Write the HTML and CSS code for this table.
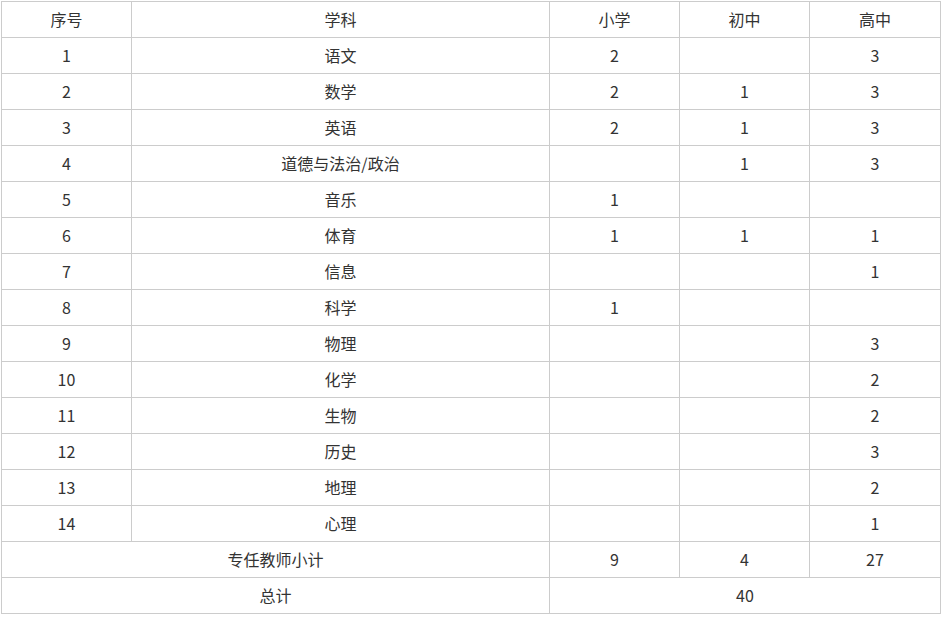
FILE: index.html
```html
<!DOCTYPE html>
<html lang="zh">
<head>
<meta charset="utf-8">
<link rel="stylesheet" href="styles.css">
</head>
<body>
<table class="grid">
<colgroup>
<col class="c1"><col class="c2"><col class="c3"><col class="c4"><col class="c5">
</colgroup>
<tbody>
<tr><td>序号</td><td>学科</td><td>小学</td><td>初中</td><td>高中</td></tr>
<tr><td>1</td><td>语文</td><td>2</td><td></td><td>3</td></tr>
<tr><td>2</td><td>数学</td><td>2</td><td>1</td><td>3</td></tr>
<tr><td>3</td><td>英语</td><td>2</td><td>1</td><td>3</td></tr>
<tr><td>4</td><td>道德与法治/政治</td><td></td><td>1</td><td>3</td></tr>
<tr><td>5</td><td>音乐</td><td>1</td><td></td><td></td></tr>
<tr><td>6</td><td>体育</td><td>1</td><td>1</td><td>1</td></tr>
<tr><td>7</td><td>信息</td><td></td><td></td><td>1</td></tr>
<tr><td>8</td><td>科学</td><td>1</td><td></td><td></td></tr>
<tr><td>9</td><td>物理</td><td></td><td></td><td>3</td></tr>
<tr><td>10</td><td>化学</td><td></td><td></td><td>2</td></tr>
<tr><td>11</td><td>生物</td><td></td><td></td><td>2</td></tr>
<tr><td>12</td><td>历史</td><td></td><td></td><td>3</td></tr>
<tr><td>13</td><td>地理</td><td></td><td></td><td>2</td></tr>
<tr><td>14</td><td>心理</td><td></td><td></td><td>1</td></tr>
<tr><td colspan="2">专任教师小计</td><td>9</td><td>4</td><td>27</td></tr>
<tr><td colspan="2">总计</td><td colspan="3">40</td></tr>
</tbody>
</table>
</body>
</html>
```
FILE: styles.css
```css
html, body {
  margin: 0;
  padding: 0;
  background: #fff;
}
body {
  padding: 1px;
  font-family: "Microsoft YaHei", "Noto Sans CJK SC", "Noto Sans", sans-serif;
  font-size: 16px;
  color: #333;
}
.grid {
  border-collapse: collapse;
  table-layout: fixed;
  width: 940px;
}
.c1 { width: 130px; }
.c2 { width: 418px; }
.c3 { width: 130px; }
.c4 { width: 130px; }
.c5 { width: 131px; }
.grid tr { height: 36px; }
.grid td {
  border: 1px solid #ccc;
  padding: 0 0 2px 0;
  text-align: center;
  vertical-align: middle;
  line-height: 20px;
}
```
